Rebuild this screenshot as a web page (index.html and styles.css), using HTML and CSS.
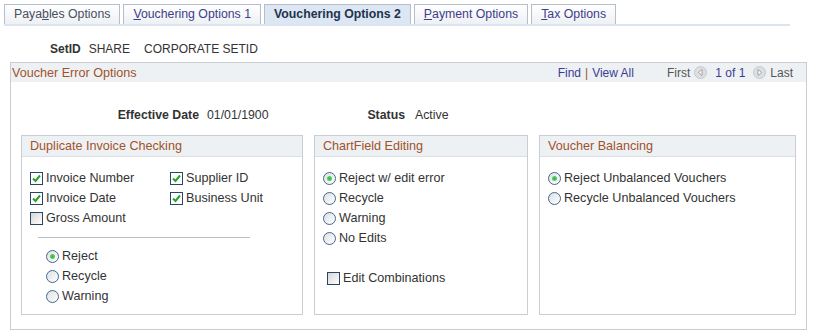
FILE: index.html
```html
<!DOCTYPE html>
<html lang="en">
<head>
    <meta charset="UTF-8">
    <title>Vouchering Options 2</title>
    <link rel="stylesheet" href="styles.css">
</head>
<body>
    <div class="tabs">
        <a class="tab">Paya<u>b</u>les Options</a>
        <a class="tab link"><u>V</u>ouchering Options 1</a>
        <span class="tab active">Vouchering Options 2</span>
        <a class="tab link"><u>P</u>ayment Options</a>
        <a class="tab link"><u>T</u>ax Options</a>
    </div>

    <div class="setid">
        <b>SetID</b>
        <span class="setid-code">SHARE</span>
        <span>CORPORATE SETID</span>
    </div>

    <div class="panel">
        <div class="panel-head">
            <span class="panel-title">Voucher Error Options</span>
            <div class="nav">
                <a class="lnk">Find</a><span class="sep">|</span><a class="lnk">View All</a>
                <span class="nav-text first">First</span>
                <svg class="nav-ico" width="13" height="13" viewBox="0 0 13 13">
                    <circle cx="6.5" cy="6.5" r="6" fill="#dcdedf" stroke="#c7c9cc"/>
                    <path d="M8 3.5 L4.5 6.5 L8 9.5 Z" fill="#fff" stroke="#8d9196" stroke-width="0.8"/>
                </svg>
                <a class="lnk count">1 of 1</a>
                <svg class="nav-ico" width="13" height="13" viewBox="0 0 13 13">
                    <circle cx="6.5" cy="6.5" r="6" fill="#dcdedf" stroke="#c7c9cc"/>
                    <path d="M5 3.5 L8.5 6.5 L5 9.5 Z" fill="#fff" stroke="#8d9196" stroke-width="0.8"/>
                </svg>
                <span class="nav-text">Last</span>
            </div>
        </div>

        <div class="eff-row">
            <span class="lbl eff-lbl">Effective Date</span>
            <span class="val eff-val">01/01/1900</span>
            <span class="lbl status-lbl">Status</span>
            <span class="val">Active</span>
        </div>

        <div class="groups">
            <div class="group dup">
                <div class="group-head">Duplicate Invoice Checking</div>
                <div class="group-body">
                    <div class="checks">
                        <label class="opt"><span class="cb on"><svg width="11" height="11" viewBox="0 0 11 11"><path d="M2 5.5 L4.5 8 L9 2.5" fill="none" stroke="#2aa12a" stroke-width="2"/></svg></span>Invoice Number</label>
                        <label class="opt"><span class="cb on"><svg width="11" height="11" viewBox="0 0 11 11"><path d="M2 5.5 L4.5 8 L9 2.5" fill="none" stroke="#2aa12a" stroke-width="2"/></svg></span>Supplier ID</label>
                        <label class="opt"><span class="cb on"><svg width="11" height="11" viewBox="0 0 11 11"><path d="M2 5.5 L4.5 8 L9 2.5" fill="none" stroke="#2aa12a" stroke-width="2"/></svg></span>Invoice Date</label>
                        <label class="opt"><span class="cb on"><svg width="11" height="11" viewBox="0 0 11 11"><path d="M2 5.5 L4.5 8 L9 2.5" fill="none" stroke="#2aa12a" stroke-width="2"/></svg></span>Business Unit</label>
                        <label class="opt"><span class="cb"></span>Gross Amount</label>
                    </div>
                    <div class="rule"></div>
                    <div class="radios indent">
                        <label class="opt"><span class="rd on"></span>Reject</label>
                        <label class="opt"><span class="rd"></span>Recycle</label>
                        <label class="opt"><span class="rd"></span>Warning</label>
                    </div>
                </div>
            </div>

            <div class="group cf">
                <div class="group-head">ChartField Editing</div>
                <div class="group-body">
                    <div class="radios">
                        <label class="opt"><span class="rd on"></span>Reject w/ edit error</label>
                        <label class="opt"><span class="rd"></span>Recycle</label>
                        <label class="opt"><span class="rd"></span>Warning</label>
                        <label class="opt"><span class="rd"></span>No Edits</label>
                    </div>
                    <label class="opt combo"><span class="cb"></span>Edit Combinations</label>
                </div>
            </div>

            <div class="group bal">
                <div class="group-head">Voucher Balancing</div>
                <div class="group-body">
                    <div class="radios">
                        <label class="opt"><span class="rd on"></span>Reject Unbalanced Vouchers</label>
                        <label class="opt"><span class="rd"></span>Recycle Unbalanced Vouchers</label>
                    </div>
                </div>
            </div>
        </div>
    </div>
</body>
</html>
```

FILE: styles.css
```css
* {
    margin: 0;
    padding: 0;
    box-sizing: border-box;
}
body {
    width: 814px;
    height: 336px;
    background: #fff;
    font-family: "Liberation Sans", Arial, sans-serif;
    font-size: 12px;
    color: #333;
    overflow: hidden;
}
u {
    text-decoration: underline;
}

/* tabs */
.tabs {
    display: flex;
    gap: 3px;
    width: 786px;
    margin: 4px 0 0 4px;
    border-bottom: 2px solid #dbe5f1;
}
.tab {
    height: 20px;
    line-height: 19px;
    padding: 0 9px;
    border: 1px solid #b4bfcc;
    border-bottom: none;
    background: linear-gradient(#ffffff, #eef0f3);
    color: #46505f;
    font-size: 12.3px;
    white-space: nowrap;
}
.tab.link {
    color: #3d3d8c;
}
.tab.active {
    background: #dde7f3;
    color: #22334d;
    font-weight: bold;
}

/* setid */
.setid {
    display: flex;
    height: 20px;
    line-height: 20px;
    margin: 13px 0 0 50px;
    font-size: 12px;
}
.setid b {
    margin-right: 8px;
}
.setid-code {
    margin-right: 14px;
}

/* main panel */
.panel {
    width: 797px;
    margin: 3px 0 0 10px;
    padding-bottom: 14px;
    border: 1px solid #c9cdd4;
}
.panel-head {
    display: flex;
    justify-content: space-between;
    align-items: center;
    height: 19px;
    padding: 0 13px 0 1px;
    background: #eef1f3;
}
.panel-title {
    color: #a0522d;
    font-size: 12.6px;
}
.nav {
    display: flex;
    align-items: center;
    font-size: 12px;
}
.lnk {
    color: #3b3b93;
}
.sep {
    color: #a0522d;
    margin: 0 4px;
}
.nav-text {
    color: #555;
}
.nav-text.first {
    margin-left: 33px;
}
.nav-ico {
    margin: 0 4px;
}
.count {
    margin: 0 4px;
}

/* effective date row */
.eff-row {
    display: flex;
    height: 20px;
    line-height: 20px;
    margin-top: 23px;
    font-size: 12.3px;
}
.lbl {
    font-weight: bold;
    text-align: right;
}
.eff-lbl {
    width: 188px;
}
.val {
    margin-left: 8px;
}
.eff-val {
    width: 120px;
}
.status-lbl {
    width: 78px;
}
.status-lbl + .val {
    margin-left: 10px;
}

/* group boxes */
.groups {
    display: flex;
    gap: 11px;
    margin: 10px 0 0 10px;
}
.group {
    height: 180px;
    border: 1px solid #c9cdd4;
}
.dup { width: 282px; }
.cf  { width: 214px; }
.bal { width: 257px; }
.group-head {
    height: 21px;
    line-height: 20px;
    padding-left: 8px;
    background: #eef1f3;
    border-bottom: 1px solid #dcdfe3;
    color: #a0522d;
    font-size: 12.6px;
}
.group-body {
    padding: 11px 0 0 8px;
}
.checks {
    display: grid;
    grid-template-columns: 140px 1fr;
}
.opt {
    display: flex;
    align-items: center;
    height: 20px;
    font-size: 12.6px;
    color: #333;
    white-space: nowrap;
}
.rule {
    width: 212px;
    height: 1px;
    margin: 9px 0 8px 8px;
    background: #b9bdc3;
}
.indent {
    padding-left: 16px;
}
.combo {
    margin: 20px 0 0 4px;
}

/* checkbox */
.cb {
    display: flex;
    align-items: center;
    justify-content: center;
    width: 13px;
    height: 13px;
    margin-right: 3px;
    border: 1px solid #2b4566;
    background: linear-gradient(135deg, #d6d6d6, #ffffff);
}
.cb.on {
    background: #fff;
}

/* radio */
.rd {
    position: relative;
    width: 13px;
    height: 13px;
    margin-right: 3px;
    border: 1px solid #46668c;
    border-radius: 50%;
    background: linear-gradient(135deg, #dcdfe3, #ffffff);
}
.rd.on::after {
    content: "";
    position: absolute;
    left: 3px;
    top: 3px;
    width: 5px;
    height: 5px;
    border-radius: 50%;
    background: radial-gradient(#2fbf3a, #6fd27a);
}
```
